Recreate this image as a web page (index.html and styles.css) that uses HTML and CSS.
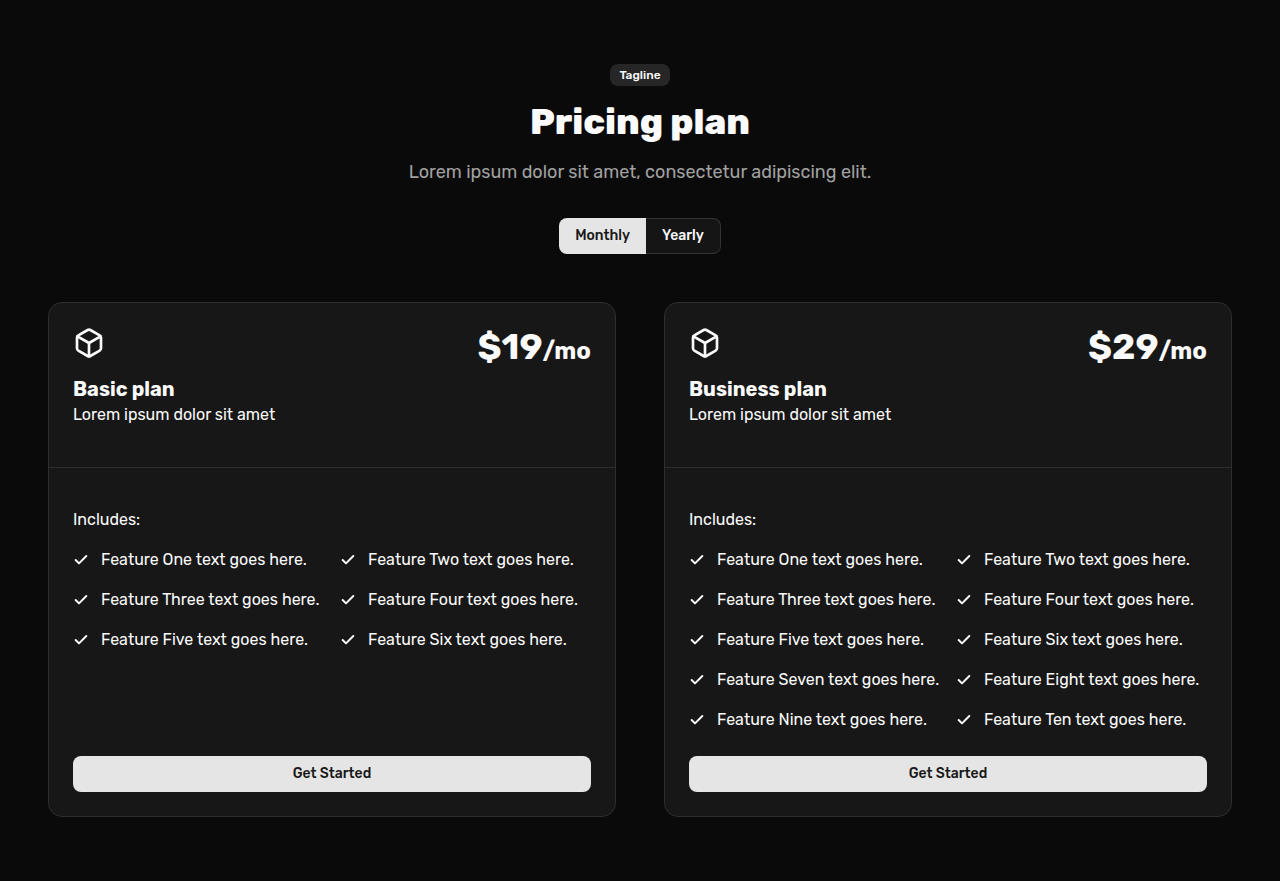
FILE: index.html
```html
<!DOCTYPE html>
<html lang="en">
<head>
<meta charset="utf-8">
<meta name="viewport" content="width=device-width, initial-scale=1">
<title>Pricing plan</title>
<link rel="stylesheet" href="styles.css">
</head>
<body>
<svg class="sprite" aria-hidden="true">
  <symbol id="box" viewBox="0 0 24 24"><path d="M21 8a2 2 0 0 0-1-1.73l-7-4a2 2 0 0 0-2 0l-7 4A2 2 0 0 0 3 8v8a2 2 0 0 0 1 1.73l7 4a2 2 0 0 0 2 0l7-4A2 2 0 0 0 21 16Z"/><path d="m3.3 7 8.7 5 8.7-5"/><path d="M12 22V12"/></symbol>
  <symbol id="check" viewBox="0 0 24 24"><path d="M20 6 9 17l-5-5"/></symbol>
</svg>
<main class="pricing">
  <header class="intro">
    <span class="badge">Tagline</span>
    <h1 class="title">Pricing plan</h1>
    <p class="subtitle">Lorem ipsum dolor sit amet, consectetur adipiscing elit.</p>
  </header>
  <div class="toggle" role="group" aria-label="Billing period">
    <button class="toggle-item active" type="button" aria-pressed="true">Monthly</button>
    <button class="toggle-item" type="button" aria-pressed="false">Yearly</button>
  </div>
  <section class="plans">
    <article class="card">
      <div class="card-head">
        <div class="plan">
          <svg class="plan-icon" aria-hidden="true"><use href="#box"/></svg>
          <h2 class="plan-name">Basic plan</h2>
          <p class="plan-text">Lorem ipsum dolor sit amet</p>
        </div>
        <p class="price">$19<span class="period">/mo</span></p>
      </div>
      <div class="card-body">
        <p class="includes">Includes:</p>
        <ul class="features">
          <li class="feature"><svg class="check" aria-hidden="true"><use href="#check"/></svg><span>Feature One text goes here.</span></li>
          <li class="feature"><svg class="check" aria-hidden="true"><use href="#check"/></svg><span>Feature Two text goes here.</span></li>
          <li class="feature"><svg class="check" aria-hidden="true"><use href="#check"/></svg><span>Feature Three text goes here.</span></li>
          <li class="feature"><svg class="check" aria-hidden="true"><use href="#check"/></svg><span>Feature Four text goes here.</span></li>
          <li class="feature"><svg class="check" aria-hidden="true"><use href="#check"/></svg><span>Feature Five text goes here.</span></li>
          <li class="feature"><svg class="check" aria-hidden="true"><use href="#check"/></svg><span>Feature Six text goes here.</span></li>
        </ul>
        <button class="cta" type="button">Get Started</button>
      </div>
    </article>
    <article class="card">
      <div class="card-head">
        <div class="plan">
          <svg class="plan-icon" aria-hidden="true"><use href="#box"/></svg>
          <h2 class="plan-name">Business plan</h2>
          <p class="plan-text">Lorem ipsum dolor sit amet</p>
        </div>
        <p class="price">$29<span class="period">/mo</span></p>
      </div>
      <div class="card-body">
        <p class="includes">Includes:</p>
        <ul class="features">
          <li class="feature"><svg class="check" aria-hidden="true"><use href="#check"/></svg><span>Feature One text goes here.</span></li>
          <li class="feature"><svg class="check" aria-hidden="true"><use href="#check"/></svg><span>Feature Two text goes here.</span></li>
          <li class="feature"><svg class="check" aria-hidden="true"><use href="#check"/></svg><span>Feature Three text goes here.</span></li>
          <li class="feature"><svg class="check" aria-hidden="true"><use href="#check"/></svg><span>Feature Four text goes here.</span></li>
          <li class="feature"><svg class="check" aria-hidden="true"><use href="#check"/></svg><span>Feature Five text goes here.</span></li>
          <li class="feature"><svg class="check" aria-hidden="true"><use href="#check"/></svg><span>Feature Six text goes here.</span></li>
          <li class="feature"><svg class="check" aria-hidden="true"><use href="#check"/></svg><span>Feature Seven text goes here.</span></li>
          <li class="feature"><svg class="check" aria-hidden="true"><use href="#check"/></svg><span>Feature Eight text goes here.</span></li>
          <li class="feature"><svg class="check" aria-hidden="true"><use href="#check"/></svg><span>Feature Nine text goes here.</span></li>
          <li class="feature"><svg class="check" aria-hidden="true"><use href="#check"/></svg><span>Feature Ten text goes here.</span></li>
        </ul>
        <button class="cta" type="button">Get Started</button>
      </div>
    </article>
  </section>
</main>
</body>
</html>
```
FILE: styles.css
```css
* { box-sizing: border-box; margin: 0; padding: 0; }
body {
  background: #0a0a0a;
  color: #fafafa;
  font-family: Rubik, Roboto, "Liberation Sans", sans-serif;
  font-size: 16px;
  line-height: 24px;
}
button { font: inherit; color: inherit; cursor: pointer; }
.sprite { display: none; }
.pricing {
  display: flex;
  flex-direction: column;
  align-items: center;
  padding: 64px 48px;
}
.intro {
  display: flex;
  flex-direction: column;
  align-items: center;
  gap: 16px;
  text-align: center;
}
.badge {
  padding: 3px 9px;
  border-radius: 8px;
  background: #262626;
  font-size: 12px;
  line-height: 16px;
  font-weight: 500;
}
.title { font-size: 36px; line-height: 40px; font-weight: 800; }
.subtitle { color: #a1a1a1; font-size: 18px; line-height: 28px; }
.toggle { display: flex; margin: 32px 0 48px; }
.toggle-item {
  height: 36px;
  padding: 0 16px;
  border: 1px solid #343434;
  border-left: 0;
  border-radius: 0 8px 8px 0;
  background: #151515;
  font-size: 14px;
  line-height: 20px;
  font-weight: 500;
}
.toggle-item.active {
  border: 0;
  border-radius: 8px 0 0 8px;
  background: #e5e5e5;
  color: #171717;
}
.plans {
  display: grid;
  grid-template-columns: 1fr 1fr;
  gap: 48px;
  width: 100%;
}
.card {
  display: flex;
  flex-direction: column;
  border: 1px solid #2e2e2e;
  border-radius: 14px;
  background: #171717;
}
.card-head {
  display: flex;
  justify-content: space-between;
  padding: 24px 24px 40px;
  border-bottom: 1px solid #2e2e2e;
}
.plan-icon {
  display: block;
  width: 32px;
  height: 32px;
  margin-bottom: 16px;
  fill: none;
  stroke: currentColor;
  stroke-width: 2;
  stroke-linecap: round;
  stroke-linejoin: round;
}
.plan-name { font-size: 20px; line-height: 28px; font-weight: 700; }
.price { font-size: 36px; line-height: 40px; font-weight: 700; }
.period { font-size: 24px; }
.card-body {
  display: flex;
  flex: 1;
  flex-direction: column;
  padding: 40px 24px 24px;
}
.features {
  display: grid;
  grid-template-columns: 1fr 1fr;
  gap: 16px;
  margin: 16px 0 24px;
  list-style: none;
}
.feature { display: flex; align-items: center; gap: 12px; white-space: nowrap; }
.check {
  flex: none;
  width: 16px;
  height: 16px;
  fill: none;
  stroke: currentColor;
  stroke-width: 3;
  stroke-linecap: round;
  stroke-linejoin: round;
}
.cta {
  height: 36px;
  margin-top: auto;
  border: 0;
  border-radius: 8px;
  background: #e5e5e5;
  color: #171717;
  font-size: 14px;
  line-height: 20px;
  font-weight: 500;
}
@media (max-width: 1100px) {
  .plans { grid-template-columns: 1fr; }
}
@media (max-width: 600px) {
  .pricing { padding: 48px 16px; }
  .features { grid-template-columns: 1fr; }
  .feature { white-space: normal; }
}
```
